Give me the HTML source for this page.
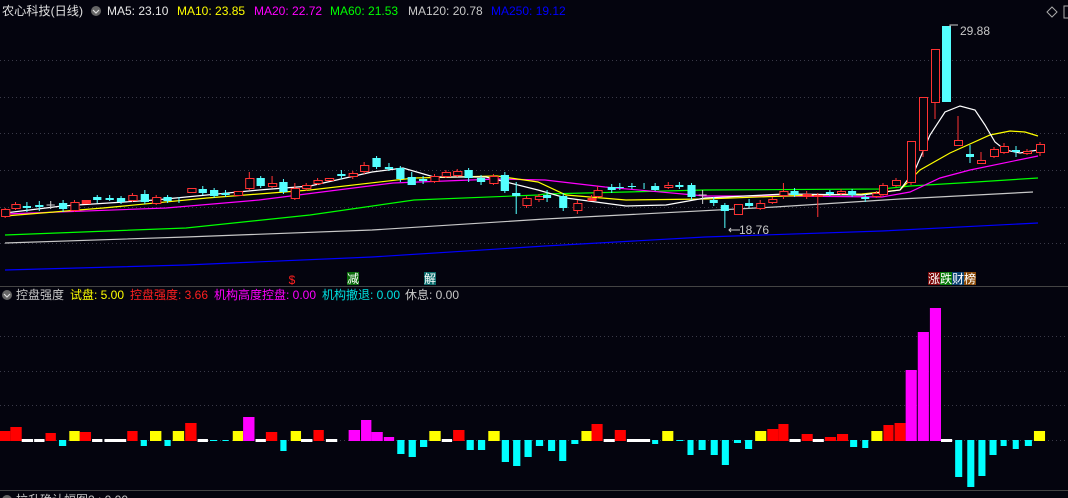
<!DOCTYPE html>
<html><head><meta charset="utf-8"><style>
html,body{margin:0;padding:0;background:#04040e;width:1068px;height:498px;overflow:hidden}
svg{display:block}
text{font-family:"Liberation Sans","Noto Sans CJK SC",sans-serif;font-size:12px}
</style></head><body>
<svg width="1068" height="498" viewBox="0 0 1068 498" xmlns="http://www.w3.org/2000/svg">
<rect width="1068" height="498" fill="#04040e"/>
<!-- grid -->
<g stroke="#3a3a48" stroke-dasharray="1,3" stroke-width="1">
<line x1="0" y1="60.5" x2="1068" y2="60.5"/><line x1="0" y1="97.5" x2="1068" y2="97.5"/>
<line x1="0" y1="133.5" x2="1068" y2="133.5"/><line x1="0" y1="170.5" x2="1068" y2="170.5"/>
<line x1="0" y1="207.5" x2="1068" y2="207.5"/><line x1="0" y1="243.5" x2="1068" y2="243.5"/>
<line x1="0" y1="336.5" x2="1068" y2="336.5"/><line x1="0" y1="371.5" x2="1068" y2="371.5"/>
<line x1="0" y1="405.5" x2="1068" y2="405.5"/><line x1="0" y1="440.5" x2="1068" y2="440.5"/>
</g>
<line x1="0" y1="286.5" x2="1068" y2="286.5" stroke="#444" />
<line x1="0" y1="490.5" x2="1068" y2="490.5" stroke="#444" />
<!-- header -->
<text x="2" y="15" fill="#e0e0e0" textLength="81" lengthAdjust="spacingAndGlyphs">农心科技(日线)</text>
<circle cx="96" cy="11" r="5" fill="#666"/><path d="M93 10 L96 13 L99 10" stroke="#ddd" fill="none" stroke-width="1.2"/>
<text x="107" y="15" fill="#e8e8e8">MA5: 23.10</text>
<text x="177" y="15" fill="#ffff00">MA10: 23.85</text>
<text x="254" y="15" fill="#ff00ff">MA20: 22.72</text>
<text x="330" y="15" fill="#00ff00">MA60: 21.53</text>
<text x="408" y="15" fill="#c8c8c8">MA120: 20.78</text>
<text x="491" y="15" fill="#0000ff">MA250: 19.12</text>
<path d="M1052 7 L1057 12 L1052 17 L1047 12 Z" stroke="#aaa" fill="none"/>
<rect x="1064" y="6" width="6" height="12" stroke="#aaa" fill="none"/>
<!-- MAs -->
<g fill="none" stroke-width="1.2">
<polyline stroke="#0000ff" points="5,270 186,265 372,257 545,246 705,237 882,231 1038,223"/>
<polyline stroke="#c8c8c8" points="5,243 186,237 372,230 545,219 775,207 900,199 1033,192"/>
<polyline stroke="#00ff00" points="5,235 186,228 310,215 414,200 538,195 545,194 705,190 882,189 910,186 960,183 1038,178"/>
<polyline stroke="#ff00ff" points="5,214 166,208 259,200 393,183 497,179 545,180 605,187 705,196 785,196 882,197 910,192 940,178 970,170 1038,156"/>
<polyline stroke="#ffff00" points="5,216 103,208 207,198 310,190 414,178 497,176 538,182 566,195 626,200 705,199 785,196 862,194 900,190 920,170 950,153 990,135 1010,131 1025,132 1038,136"/>
<polyline stroke="#ffffff" points="5,213 62,206 155,200 259,190 310,186 372,172 403,168 434,177 486,177 538,190 566,198 626,206 666,205 705,198 785,194 862,195 900,190 915,170 930,135 945,112 960,106 975,110 985,125 995,142 1005,150 1020,153 1038,150"/>
</g>
<!-- LEFT candles (scaled) -->
<g transform="scale(1.0345,1)">
<path stroke="#ff3232" fill="none" d="M5 208v10M15 202v8M72 200v12M128 193v9M151 195v10M241 172v18M263 176v12M285 183v17M296 183v8M307 178v7M341 171v8M352 162v12M420 174v9M431 170v8M442 169v8M477 174v11M509 196v12M521 194v8"/>
<g stroke="#ff3232" fill="#04040e">
<rect x="1.5" y="209.5" width="8" height="7"/><rect x="11.5" y="204.5" width="8" height="4"/>
<rect x="68.5" y="202.5" width="8" height="8"/><rect x="79.5" y="200.5" width="8" height="3" fill="#ff3232"/>
<rect x="124.5" y="195.5" width="8" height="5"/><rect x="147.5" y="197.5" width="8" height="6"/>
<rect x="181.5" y="188.5" width="8" height="4"/><rect x="226.5" y="191.5" width="8" height="4"/>
<rect x="237.5" y="178.5" width="8" height="10"/><rect x="259.5" y="183.5" width="8" height="3"/>
<rect x="281.5" y="188.5" width="8" height="10"/><rect x="292.5" y="185.5" width="8" height="3"/>
<rect x="303.5" y="180.5" width="8" height="3"/><rect x="314.5" y="178.5" width="8" height="2"/>
<rect x="337.5" y="173.5" width="8" height="3"/><rect x="348.5" y="165.5" width="8" height="6"/>
<rect x="416.5" y="176.5" width="8" height="5"/><rect x="427.5" y="172.5" width="8" height="4"/>
<rect x="438.5" y="171.5" width="8" height="4"/><rect x="473.5" y="176.5" width="8" height="7"/>
<rect x="505.5" y="198.5" width="8" height="7"/><rect x="517.5" y="196.5" width="8" height="3"/>
</g>
<path stroke="#54ffff" d="M26 202v10M38 201v10M61 200v12M94 195v8M106 195v6M117 196v8M140 190v14M162 195v8M173 197v6M196 186v9M207 188v10M218 190v7M252 176v12M274 179v15M330 170v9M364 156v13M376 163v8M387 166v16M398 172v13M409 176v8M453 168v14M465 175v10M488 172v21M499 182v32"/>
<g fill="#54ffff">
<rect x="22" y="206" width="8" height="2"/><rect x="34" y="205" width="8" height="2"/>
<rect x="57" y="203" width="8" height="6"/><rect x="90" y="197" width="8" height="3"/>
<rect x="102" y="198" width="8" height="2"/><rect x="113" y="198" width="8" height="4"/>
<rect x="136" y="194" width="8" height="8"/><rect x="158" y="197" width="8" height="4"/>
<rect x="192" y="189" width="8" height="4"/><rect x="203" y="190" width="8" height="6"/>
<rect x="214" y="193" width="8" height="2"/><rect x="248" y="178" width="8" height="8"/>
<rect x="270" y="182" width="8" height="10"/><rect x="326" y="174" width="8" height="2"/>
<rect x="360" y="158" width="8" height="9"/><rect x="372" y="167" width="8" height="2"/>
<rect x="383" y="168" width="8" height="11"/><rect x="394" y="177" width="8" height="8"/>
<rect x="405" y="179" width="8" height="2"/><rect x="449" y="170" width="8" height="8"/>
<rect x="461" y="178" width="8" height="4"/><rect x="484" y="175" width="8" height="16"/>
<rect x="495" y="193" width="8" height="3"/>
</g>
<path d="M45 205h8M49 201v8" stroke="#ccc"/>
</g>
<!-- MID candles -->
<g transform="translate(540,0) scale(1.0101,1) translate(-540,0)">
<path stroke="#ff3232" fill="none" d="M577 200v14M597 186v12M591 195v6M667 182v7M758 200v10M770 197v7M781 183v16M804 191v8M815 193v24M838 189v6M873 191v7"/>
<g stroke="#ff3232" fill="#04040e">
<rect x="573.5" y="203.5" width="8" height="7"/><rect x="587.5" y="198.5" width="8" height="2" fill="#ff3232"/>
<rect x="593.5" y="190.5" width="8" height="6"/><rect x="663.5" y="185.5" width="8" height="2"/>
<rect x="732.5" y="204.5" width="8" height="10"/><rect x="754.5" y="203.5" width="8" height="5"/>
<rect x="766.5" y="199.5" width="8" height="3"/><rect x="777.5" y="191.5" width="8" height="4"/>
<rect x="800.5" y="194.5" width="8" height="2" fill="#ff3232"/><rect x="811.5" y="195.5" width="8" height="1"/>
<rect x="834.5" y="191.5" width="8" height="2"/><rect x="869.5" y="193.5" width="8" height="3"/>
</g>
<path stroke="#54ffff" d="M547 190v12M563 193v18M611 184v9M619 183v7M631 183v6M643 183v6M654 183v8M678 182v7M690 183v17M712 197v9M723 203v25M747 199v9M792 188v9M827 190v6M849 189v8M862 194v8"/>
<g fill="#54ffff">
<rect x="543" y="195" width="8" height="3"/>
<rect x="559" y="196" width="8" height="12"/><rect x="607" y="187" width="8" height="3"/>
<rect x="615" y="187" width="8" height="1"/><rect x="627" y="186" width="8" height="1"/>
<rect x="650" y="186" width="8" height="4"/><rect x="674" y="185" width="8" height="2"/>
<rect x="686" y="185" width="8" height="12"/><rect x="708" y="200" width="8" height="3"/>
<rect x="719" y="205" width="8" height="6"/><rect x="743" y="203" width="8" height="3"/>
<rect x="788" y="191" width="8" height="4"/><rect x="823" y="192" width="8" height="2"/>
<rect x="845" y="191" width="8" height="4"/><rect x="858" y="197" width="8" height="2"/>
</g>
<path d="M697 195h8M701 190v14" stroke="#ccc"/>
</g>
<!-- RIGHT candles -->
<path stroke="#ff3232" fill="none" d="M883 183v13M896 178v9M911 141v44M923 97v60M935 49v70M958 116v30M981 152v12M994 147v11M1004 143v11M1027 149v6M1040 142v14"/>
<g stroke="#ff3232" fill="#04040e">
<rect x="879.5" y="185.5" width="8" height="9"/><rect x="892.5" y="180.5" width="8" height="5"/>
<rect x="907.5" y="141.5" width="8" height="41"/><rect x="919.5" y="97.5" width="8" height="53"/>
<rect x="931.5" y="49.5" width="8" height="53"/><rect x="954.5" y="140.5" width="8" height="5"/>
<rect x="977.5" y="160.5" width="8" height="3"/><rect x="990.5" y="149.5" width="8" height="7"/>
<rect x="1000.5" y="146.5" width="8" height="6"/><rect x="1023.5" y="151.5" width="8" height="2"/>
<rect x="1036.5" y="144.5" width="8" height="8"/>
</g>
<path stroke="#54ffff" d="M946 26v76M970 145v18M1016 146v11"/>
<g fill="#54ffff">
<rect x="942" y="26" width="9" height="76"/><rect x="966" y="154" width="8" height="3"/>
<rect x="1012" y="150" width="8" height="2"/>
</g>
<!-- labels -->
<path d="M958 25 L950 25 L950 28" stroke="#ccc" fill="none"/>
<text x="960" y="35" fill="#c8c8c8">29.88</text>
<path d="M740 230 L729 230 M731 228 L729 230 L731 232" stroke="#ccc" fill="none"/>
<text x="739" y="234" fill="#c8c8c8">18.76</text>
<text x="292" y="284" fill="#ff2020" font-size="12" text-anchor="middle">$</text>
<rect x="347" y="272" width="12" height="13" fill="#0a6a0a"/><text x="347" y="283" fill="#fff" font-size="12">减</text>
<rect x="424" y="272" width="12" height="13" fill="#0a6a6a"/><text x="424" y="283" fill="#fff" font-size="12">解</text>
<rect x="928" y="272" width="12" height="13" fill="#7a0808"/><rect x="940" y="272" width="12" height="13" fill="#087a08"/>
<rect x="952" y="272" width="12" height="13" fill="#084070"/><rect x="964" y="272" width="12" height="13" fill="#8a4a08"/>
<text x="928" y="283" fill="#fff" font-size="12">涨跌财榜</text>
<!-- indicator header -->
<circle cx="7" cy="295" r="5" fill="#666"/><path d="M4 294 L7 297 L10 294" stroke="#ddd" fill="none" stroke-width="1.2"/>
<text x="16" y="299" fill="#c8c8c8">控盘强度</text>
<text x="70" y="299" fill="#ffff00">试盘: 5.00</text>
<text x="130" y="299" fill="#ff2020">控盘强度: 3.66</text>
<text x="214" y="299" fill="#ff00ff">机构高度控盘: 0.00</text>
<text x="322" y="299" fill="#00e0e0">机构撤退: 0.00</text>
<text x="405" y="299" fill="#c8c8c8">休息: 0.00</text>
<!-- LEFT bars -->
<g transform="scale(1.0345,1)">
<g fill="#ff0000">
<rect x="0" y="431" width="10" height="10"/><rect x="10" y="427" width="11" height="14"/><rect x="44" y="433" width="10" height="8"/><rect x="77" y="432" width="11" height="9"/><rect x="123" y="431" width="10" height="10"/><rect x="179" y="423" width="11" height="18"/><rect x="257" y="432" width="11" height="9"/><rect x="303" y="430" width="10" height="11"/><rect x="438" y="430" width="11" height="11"/>
</g>
<g fill="#ffff00">
<rect x="67" y="431" width="10" height="10"/><rect x="145" y="431" width="11" height="10"/><rect x="167" y="431" width="11" height="10"/><rect x="225" y="431" width="10" height="10"/><rect x="281" y="431" width="10" height="10"/><rect x="415" y="431" width="11" height="10"/><rect x="472" y="431" width="11" height="10"/>
</g>
<g fill="#ff00ff">
<rect x="235" y="417" width="11" height="24"/><rect x="337" y="430" width="11" height="11"/><rect x="349" y="420" width="10" height="21"/><rect x="359" y="432" width="11" height="9"/><rect x="371" y="437" width="10" height="4"/>
</g>
<g fill="#ffffff">
<rect x="21" y="439" width="11" height="3"/><rect x="33" y="439" width="10" height="3"/><rect x="89" y="439" width="10" height="3"/><rect x="101" y="439" width="21" height="3"/><rect x="191" y="439" width="10" height="3"/><rect x="247" y="439" width="10" height="3"/><rect x="291" y="439" width="11" height="3"/><rect x="315" y="439" width="11" height="3"/><rect x="427" y="439" width="10" height="3"/>
</g>
<g fill="#00ffff">
<rect x="57" y="440" width="7" height="6"/><rect x="136" y="440" width="6" height="6"/><rect x="159" y="440" width="6" height="6"/><rect x="203" y="440" width="7" height="1"/><rect x="215" y="440" width="6" height="1"/><rect x="271" y="440" width="6" height="11"/><rect x="384" y="440" width="7" height="14"/><rect x="395" y="440" width="7" height="17"/><rect x="406" y="440" width="7" height="7"/><rect x="451" y="440" width="7" height="10"/><rect x="462" y="440" width="7" height="10"/><rect x="485" y="440" width="7" height="22"/><rect x="496" y="440" width="7" height="26"/><rect x="507" y="440" width="7" height="17"/><rect x="518" y="440" width="7" height="6"/>
</g>
</g>
<!-- RIGHT bars -->
<g transform="translate(540,0) scale(1.0101,1) translate(-540,0)">
<g fill="#ff0000">
<rect x="591" y="424" width="11" height="17"/><rect x="614" y="430" width="11" height="11"/><rect x="765" y="429" width="11" height="12"/><rect x="776" y="424" width="10" height="17"/><rect x="799" y="434" width="11" height="7"/><rect x="822" y="437" width="11" height="4"/><rect x="834" y="434" width="11" height="7"/><rect x="880" y="425" width="10" height="16"/><rect x="891" y="423" width="11" height="18"/>
</g>
<g fill="#ffff00">
<rect x="581" y="431" width="10" height="10"/><rect x="661" y="431" width="11" height="10"/><rect x="753" y="431" width="11" height="10"/><rect x="868" y="431" width="11" height="10"/><rect x="1029" y="431" width="11" height="10"/>
</g>
<g fill="#ff00ff">
<rect x="902" y="370" width="11" height="71"/><rect x="914" y="332" width="11" height="109"/><rect x="926" y="308" width="11" height="133"/>
</g>
<g fill="#ffffff">
<rect x="603" y="439" width="11" height="3"/><rect x="626" y="439" width="23" height="3"/><rect x="787" y="439" width="11" height="3"/><rect x="810" y="439" width="11" height="3"/><rect x="937" y="439" width="11" height="3"/>
</g>
<g fill="#00ffff">
<rect x="540" y="440" width="3" height="6"/><rect x="548" y="440" width="7" height="11"/><rect x="559" y="440" width="7" height="21"/><rect x="571" y="440" width="7" height="4"/><rect x="651" y="440" width="6" height="4"/><rect x="675" y="440" width="7" height="1"/><rect x="686" y="440" width="6" height="15"/><rect x="697" y="440" width="7" height="10"/><rect x="709" y="440" width="7" height="15"/><rect x="720" y="440" width="7" height="25"/><rect x="732" y="440" width="7" height="3"/><rect x="743" y="440" width="7" height="9"/><rect x="847" y="440" width="7" height="7"/><rect x="859" y="440" width="6" height="8"/><rect x="951" y="440" width="7" height="37"/><rect x="963" y="440" width="7" height="47"/><rect x="974" y="440" width="7" height="36"/><rect x="985" y="440" width="7" height="15"/><rect x="996" y="440" width="6" height="6"/><rect x="1008" y="440" width="6" height="9"/><rect x="1020" y="440" width="7" height="6"/>
</g>
</g>
<!-- bottom -->
<circle cx="7" cy="500" r="5" fill="#666"/>
<text x="16" y="504" fill="#c8c8c8">拉升确认幅图2 : 0.00</text>
</svg>
</body></html>
